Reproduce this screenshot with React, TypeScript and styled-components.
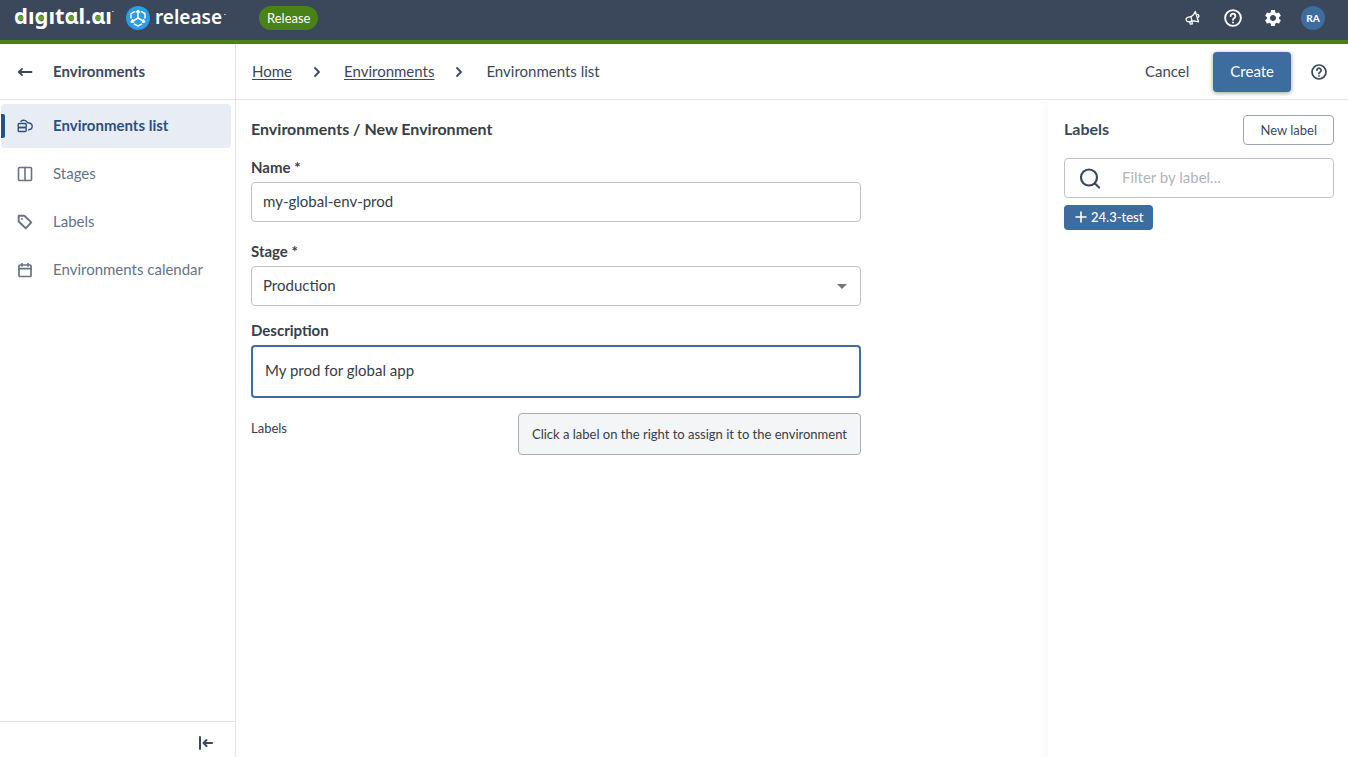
import React from "react";
import styled, { createGlobalStyle } from "styled-components";

const ink = "#3b485c";
const body = "#364046";
const blue = "#3d6c9e";
const line = "#e3e5e8";

const GlobalStyle = createGlobalStyle`
  *, *::before, *::after { box-sizing: border-box; }
  body {
    margin: 0;
    background: #fff;
    color: ${body};
    font: 15px/20px Lato, "Liberation Sans", sans-serif;
  }
  button, input, select, textarea { font: inherit; color: inherit; }
  button { cursor: pointer; }
`;

const Page = styled.div`
  display: flex;
  flex-direction: column;
  min-height: 100vh;
`;

const TopBar = styled.header`
  display: flex;
  align-items: center;
  height: 44px;
  padding: 0 23px 4px 14px;
  background: ${ink};
  border-bottom: 4px solid #498217;
`;

const Brand = styled.a`
  display: flex;
  margin-right: 30px;
`;

const Badge = styled.span`
  padding: 2px 8px;
  border-radius: 12px;
  background: #498217;
  color: #fff;
  font-size: 13px;
`;

const TopActions = styled.div`
  display: flex;
  align-items: center;
  gap: 16px;
  margin-left: auto;
`;

const IconButton = styled.button<{ $tone?: string }>`
  display: flex;
  align-items: center;
  justify-content: center;
  width: 24px;
  height: 24px;
  padding: 0;
  border: 0;
  background: none;
  color: ${(p) => p.$tone ?? ink};
`;

const Avatar = styled.button`
  width: 24px;
  height: 24px;
  padding: 0;
  border: 0;
  border-radius: 50%;
  background: ${blue};
  color: #fff;
  font-size: 10px;
  font-weight: 900;
`;

const Columns = styled.div`
  display: flex;
  flex: 1;
`;

const Sidebar = styled.aside`
  display: flex;
  flex-direction: column;
  flex: none;
  width: 236px;
  border-right: 1px solid ${line};
`;

const SidebarHead = styled.div`
  display: flex;
  align-items: center;
  gap: 16px;
  height: 56px;
  padding-left: 13px;
  border-bottom: 1px solid ${line};
  color: ${ink};
  font-weight: 700;
`;

const LineText = styled.span`
  padding-bottom: 2px;
`;

const Nav = styled.nav`
  display: flex;
  flex-direction: column;
  gap: 4px;
  padding: 4px 4px 4px 1px;
`;

const NavItem = styled.a<{ $active?: boolean }>`
  position: relative;
  display: flex;
  align-items: center;
  gap: 20px;
  height: 44px;
  padding-left: 16px;
  border-radius: 4px;
  background: ${(p) => (p.$active ? "#e8edf5" : "transparent")};
  color: ${(p) => (p.$active ? "#2a5080" : "#667385")};
  font-weight: ${(p) => (p.$active ? 700 : 400)};
  text-decoration: none;

  &::before {
    content: "";
    position: absolute;
    left: 0;
    top: 10px;
    bottom: 10px;
    width: 4px;
    border-radius: 0 2px 2px 0;
    background: ${(p) => (p.$active ? "#225385" : "transparent")};
  }
`;

const SidebarFoot = styled.div`
  display: flex;
  justify-content: flex-end;
  align-items: flex-end;
  height: 36px;
  margin-top: auto;
  padding: 0 17px 2px 0;
  border-top: 1px solid ${line};
`;

const Main = styled.main`
  display: flex;
  flex-direction: column;
  flex: 1;
  min-width: 0;
`;

const ActionBar = styled.div`
  display: flex;
  align-items: center;
  height: 56px;
  padding: 0 17px 0 16px;
  border-bottom: 1px solid ${line};
`;

const Crumbs = styled.nav`
  display: flex;
  align-items: center;
  gap: 18px;
  color: ${ink};
`;

const Crumb = styled.a`
  color: inherit;
  text-underline-offset: 2px;
`;

const Actions = styled.div`
  display: flex;
  align-items: center;
  margin-left: auto;
`;

const TextButton = styled.button`
  margin-right: 8px;
  padding: 8px 16px 10px;
  border: 0;
  background: none;
  color: ${ink};
`;

const PrimaryButton = styled.button`
  height: 40px;
  margin-right: 16px;
  padding: 0 17px 2px;
  border: 0;
  border-radius: 4px;
  background: ${blue};
  box-shadow: 0 1px 4px rgba(0, 0, 0, 0.4);
  color: #fff;
`;

const Content = styled.div`
  display: flex;
  flex: 1;
`;

const Form = styled.form`
  flex: 1;
  min-width: 0;
  padding: 19px 15px;
`;

const Fields = styled.div`
  display: flex;
  flex-direction: column;
  max-width: 610px;
`;

const Title = styled.h1`
  margin: 0;
  color: ${body};
  font-size: 16px;
  font-weight: 700;
`;

const Field = styled.div<{ $gap: number }>`
  display: flex;
  flex-direction: column;
  gap: 5px;
  margin-top: ${(p) => p.$gap}px;
`;

const Label = styled.label`
  color: ${body};
  font-weight: 700;
`;

const TextInput = styled.input`
  height: 40px;
  padding: 0 11px 2px;
  border: 1px solid #c0c3c6;
  border-radius: 4px;
  background: #fff;
  outline: 0;
`;

const SelectWrap = styled.div`
  position: relative;
  display: flex;

  svg {
    position: absolute;
    right: 14px;
    top: 18px;
    pointer-events: none;
  }
`;

const Select = styled.select`
  width: 100%;
  height: 40px;
  padding: 0 11px 2px;
  border: 1px solid #c0c3c6;
  border-radius: 4px;
  background: #fff;
  appearance: none;
`;

const TextArea = styled.textarea`
  display: block;
  height: 53px;
  padding: 13px 12px;
  border: 2px solid ${blue};
  border-radius: 4px;
  outline: 0;
  resize: none;
  overflow: hidden;
`;

const AssignRow = styled.div`
  display: flex;
  justify-content: space-between;
  margin-top: 15px;
  font-size: 13px;
`;

const AssignLabel = styled.span`
  padding-top: 5px;
`;

const Hint = styled.div`
  padding: 10px 13px;
  border: 1px solid #a4adb9;
  border-radius: 4px;
  background: #f3f5f7;
`;

const LabelPanel = styled.aside`
  flex: none;
  width: 300px;
  padding: 15px 14px 15px 16px;
  box-shadow: -3px 4px 6px rgba(0, 0, 0, 0.03);
`;

const PanelHead = styled.div`
  display: flex;
  align-items: center;
  justify-content: space-between;
  margin-bottom: 13px;
`;

const PanelTitle = styled.h2`
  margin: 0;
  padding-bottom: 2px;
  color: ${ink};
  font-size: 16px;
  font-weight: 700;
`;

const OutlineButton = styled.button`
  height: 30px;
  padding: 0 16px;
  border: 1px solid #9ca7b5;
  border-radius: 4px;
  background: #fff;
  color: ${ink};
  font-size: 13px;
`;

const SearchBox = styled.label`
  display: flex;
  align-items: center;
  gap: 20px;
  height: 40px;
  padding: 0 13px;
  border: 1px solid #c0c3c6;
  border-radius: 4px;
  color: ${ink};
`;

const SearchInput = styled.input`
  flex: 1;
  min-width: 0;
  padding: 0 0 2px;
  border: 0;
  outline: 0;
  background: none;

  &::placeholder { color: #b2b5b9; opacity: 1; }
`;

const Tag = styled.button`
  display: flex;
  align-items: center;
  gap: 4px;
  height: 25px;
  margin-top: 7px;
  padding: 0 10px 1px 11px;
  border: 0;
  border-radius: 4px;
  background: ${blue};
  color: #fff;
  font-size: 13px;
  font-weight: 500;
`;

const stroke = {
  fill: "none",
  stroke: "currentColor",
  strokeLinecap: "round",
  strokeLinejoin: "round",
} as const;

const Logo = () => (
  <svg width="215" height="36" viewBox="0 -2 215 36" role="img" aria-label="digital.ai release">
    <g fill="#fff" fontFamily="'Noto Sans', sans-serif">
      <text x="0" y="22" fontSize="22" fontWeight="700">dıgıtɑl.ɑı</text>
      <text x="141" y="22" fontSize="19" fontWeight="600">release</text>
    </g>
    <g fill="#5fa02e">
      <circle cx="6.500" cy="16" r="2.800" />
      <circle cx="27" cy="16" r="2.800" />
      <circle cx="57" cy="16" r="2.800" />
      <circle cx="84" cy="16" r="2.800" />
    </g>
    <g stroke="#aab2bd" strokeWidth="1">
      <path d="M98 9.500h2M210 12.500h2" />
    </g>
    <circle cx="124" cy="16" r="12" fill="#2b9de8" />
    <g fill="none" stroke="#fff" strokeWidth="1.500" strokeLinejoin="round">
      <path d="M121 9.300l-4 2.400v4.800M127 9.300l4 2.400v4.800M120 21.800l4 2.200 4-2.200" />
      <path d="M124 9v7l-6 3.500M124 16l6 3.500" />
      <path d="M122 10.500l2-2 2 2M118.800 17.300l-1.600 2.600 3 .4M129.200 17.300l1.600 2.600-3 .4" />
    </g>
  </svg>
);

const HelpIcon = ({ size }: { size: number }) => (
  <svg width={size} height={size} viewBox="0 0 16 16" {...stroke} strokeWidth="1.700">
    <circle cx="8" cy="8" r="7" />
    <path d="M5.900 6.300a2.100 2.100 0 1 1 3.300 1.700C8.400 8.500 8 8.800 8 9.600" />
    <path d="M8 11.900v.1" />
  </svg>
);

const MegaphoneIcon = () => (
  <svg width="16" height="16" viewBox="0 0 16 16" {...stroke} strokeWidth="1.300">
    <path d="M10.300 1.500l3.200 10.300-4.500-1-5.300.9a2.200 2.200 0 0 1-.9-4.300l3.700-1C8 5.600 9.500 3.600 10.300 1.500z" />
    <path d="M6 6.800l1 4.200M4.600 11.700l.8 2.500 2-.4-.6-2.400M12.500 4.500a1.500 1.500 0 0 1 .8 2.700" />
  </svg>
);

const GearIcon = () => (
  <svg width="20" height="20" viewBox="0 0 24 24" fill="currentColor">
    <path d="M19.140 12.940c.04-.3.06-.61.06-.94 0-.32-.02-.64-.07-.94l2.030-1.580c.18-.14.23-.41.12-.61l-1.920-3.320c-.12-.22-.37-.29-.59-.22l-2.390.96c-.5-.38-1.030-.7-1.620-.94l-.36-2.540c-.04-.24-.24-.41-.48-.41h-3.840c-.24 0-.43.17-.47.41l-.36 2.540c-.59.24-1.130.57-1.620.94l-2.390-.96c-.22-.08-.47 0-.59.22L2.740 8.870c-.12.21-.08.47.12.61l2.030 1.580c-.05.3-.09.63-.09.94s.02.64.07.94l-2.030 1.580c-.18.14-.23.41-.12.61l1.920 3.320c.12.22.37.29.59.22l2.390-.96c.5.38 1.030.7 1.620.94l.36 2.540c.05.24.24.41.48.41h3.840c.24 0 .44-.17.47-.41l.36-2.540c.59-.24 1.130-.56 1.620-.94l2.390.96c.22.08.47 0 .59-.22l1.920-3.320c.12-.22.07-.47-.12-.61l-2.010-1.580zM12 15.600c-1.980 0-3.600-1.620-3.600-3.600s1.620-3.600 3.600-3.600 3.600 1.620 3.600 3.600-1.620 3.600-3.600 3.600z" />
  </svg>
);

const BackIcon = () => (
  <svg width="16" height="16" viewBox="0 0 16 16" {...stroke} strokeWidth="1.800">
    <path d="M14.500 8H2M5 4.800L1.800 8 5 11.200" />
  </svg>
);

const EnvironmentIcon = () => (
  <svg width="16" height="16" viewBox="0 0 16 16" {...stroke} strokeWidth="1.400">
    <rect x="1.200" y="5.500" width="8" height="4" rx="1" />
    <rect x="1.200" y="9.500" width="8" height="4" rx="1" />
    <path d="M4 3.200c1.800-1.500 5.500-1.300 6.600 1.500 3 .1 4.600 1.800 4.600 3.600 0 1.900-1.400 3.300-3.600 3.600" />
  </svg>
);

const StagesIcon = () => (
  <svg width="16" height="16" viewBox="0 0 16 16" {...stroke} strokeWidth="1.600">
    <rect x="1.500" y="1.500" width="13" height="13" rx="1" />
    <path d="M8 1.500v13" />
  </svg>
);

const TagIcon = () => (
  <svg width="16" height="16" viewBox="0 0 16 16" {...stroke} strokeWidth="1.900">
    <path d="M1.700 1.700h5.600l7 6.700-5.600 5.900-7-6.800z" />
    <path d="M4.900 4.900v.1" />
  </svg>
);

const CalendarIcon = () => (
  <svg width="16" height="16" viewBox="0 0 16 16" {...stroke} strokeWidth="1.700">
    <rect x="2" y="3" width="12" height="11.500" rx="1" />
    <path d="M2 6.700h12M5 1.500V4M11 1.500V4" />
  </svg>
);

const CollapseIcon = () => (
  <svg width="16" height="16" viewBox="0 0 16 16" {...stroke} strokeWidth="2">
    <path d="M2 2v12M14 8H6M8.500 5L5.500 8l3 3" />
  </svg>
);

const ChevronIcon = () => (
  <svg width="16" height="16" viewBox="0 0 16 16" {...stroke} strokeWidth="1.800">
    <path d="M5 4l4 4-4 4" />
  </svg>
);

const SearchIcon = () => (
  <svg width="24" height="24" viewBox="0 0 24 24" {...stroke} strokeWidth="2.200">
    <circle cx="11" cy="11.500" r="8" />
    <path d="M17 17.500l4 4" />
  </svg>
);

const PlusIcon = () => (
  <svg width="12" height="12" viewBox="0 0 12 12" {...stroke} strokeWidth="1.600">
    <path d="M6 1v10M1 6h10" />
  </svg>
);

const navItems = [
  { text: "Environments list", icon: <EnvironmentIcon />, active: true },
  { text: "Stages", icon: <StagesIcon /> },
  { text: "Labels", icon: <TagIcon /> },
  { text: "Environments calendar", icon: <CalendarIcon /> },
];

export default function App() {
  return (
    <>
      <GlobalStyle />
      <Page>
        <TopBar>
          <Brand href="#">
            <Logo />
          </Brand>
          <Badge>Release</Badge>
          <TopActions>
            <IconButton $tone="#fff" aria-label="Announcements"><MegaphoneIcon /></IconButton>
            <IconButton $tone="#fff" aria-label="Help"><HelpIcon size={18} /></IconButton>
            <IconButton $tone="#fff" aria-label="Settings"><GearIcon /></IconButton>
            <Avatar>RA</Avatar>
          </TopActions>
        </TopBar>
        <Columns>
          <Sidebar>
            <SidebarHead>
              <IconButton aria-label="Back"><BackIcon /></IconButton>
              <LineText>Environments</LineText>
            </SidebarHead>
            <Nav>
              {navItems.map((item) => (
                <NavItem key={item.text} href="#" $active={item.active}>
                  {item.icon}
                  <LineText>{item.text}</LineText>
                </NavItem>
              ))}
            </Nav>
            <SidebarFoot>
              <IconButton aria-label="Collapse sidebar"><CollapseIcon /></IconButton>
            </SidebarFoot>
          </Sidebar>
          <Main>
            <ActionBar>
              <Crumbs aria-label="Breadcrumb">
                <LineText><Crumb href="#">Home</Crumb></LineText>
                <ChevronIcon />
                <LineText><Crumb href="#">Environments</Crumb></LineText>
                <ChevronIcon />
                <LineText>Environments list</LineText>
              </Crumbs>
              <Actions>
                <TextButton type="button">Cancel</TextButton>
                <PrimaryButton type="submit" form="environment">Create</PrimaryButton>
                <IconButton aria-label="Page help"><HelpIcon size={16} /></IconButton>
              </Actions>
            </ActionBar>
            <Content>
              <Form id="environment" onSubmit={(e) => e.preventDefault()}>
                <Fields>
                  <Title>Environments / New Environment</Title>
                  <Field $gap={18}>
                    <Label htmlFor="name">Name *</Label>
                    <TextInput id="name" defaultValue="my-global-env-prod" />
                  </Field>
                  <Field $gap={19}>
                    <Label htmlFor="stage">Stage *</Label>
                    <SelectWrap>
                      <Select id="stage" defaultValue="Production">
                        <option>Production</option>
                      </Select>
                      <svg width="10" height="5" viewBox="0 0 10 5" fill="#757575">
                        <path d="M0 0h10L5 5z" />
                      </svg>
                    </SelectWrap>
                  </Field>
                  <Field $gap={14}>
                    <Label htmlFor="description">Description</Label>
                    <TextArea id="description" rows={1} defaultValue="My prod for global app" />
                  </Field>
                  <AssignRow>
                    <AssignLabel>Labels</AssignLabel>
                    <Hint>Click a label on the right to assign it to the environment</Hint>
                  </AssignRow>
                </Fields>
              </Form>
              <LabelPanel>
                <PanelHead>
                  <PanelTitle>Labels</PanelTitle>
                  <OutlineButton type="button">New label</OutlineButton>
                </PanelHead>
                <SearchBox>
                  <SearchIcon />
                  <SearchInput aria-label="Filter by label" placeholder="Filter by label..." />
                </SearchBox>
                <Tag type="button">
                  <PlusIcon />
                  24.3-test
                </Tag>
              </LabelPanel>
            </Content>
          </Main>
        </Columns>
      </Page>
    </>
  );
}
